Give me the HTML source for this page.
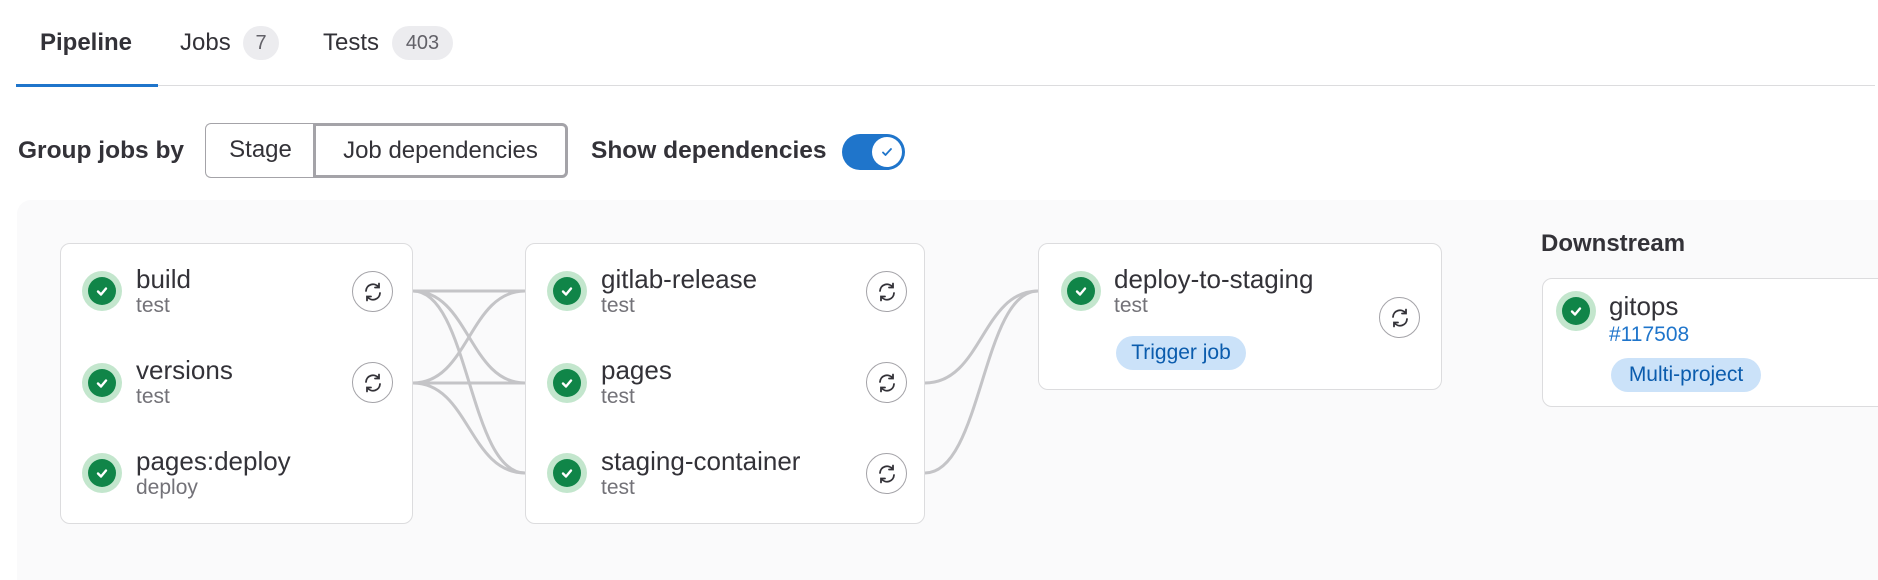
<!DOCTYPE html>
<html><head><meta charset="utf-8"><style>
*{box-sizing:border-box;margin:0;padding:0}
body{width:1878px;height:580px;background:#fff;font-family:"Liberation Sans",sans-serif;color:#333238;position:relative;overflow:hidden}
.a{position:absolute}
.tab{position:absolute;top:28px;font-size:24px;line-height:30px;color:#333238}
.badge{position:absolute;background:#ececef;color:#626168;border-radius:18px;font-size:20px;text-align:center;line-height:34px;height:34px;top:26px}
.card{position:absolute;background:#fff;border:1px solid #dcdcde;border-radius:10px}
.ic{position:absolute;width:40px;height:40px;border-radius:50%;background:#c3e6cd}
.ic::after{content:"";position:absolute;left:6px;top:6px;width:28px;height:28px;border-radius:50%;background:#108548}
.ic svg{position:absolute;left:11px;top:11px;z-index:2}
.nm{position:absolute;font-size:26px;line-height:30px;color:#333238}
.sb{position:absolute;font-size:21px;line-height:24px;color:#737278}
.rt{position:absolute;width:41px;height:41px;border-radius:50%;border:1.5px solid #a4a3a8;background:#fff}
.rt svg{position:absolute;left:9px;top:9px}
.pill{position:absolute;background:#cbe2f9;color:#0b5cad;border-radius:17px;font-size:21px;line-height:34px;height:34px;text-align:center}
</style></head><body>
<div class="tab" style="left:40px;font-weight:bold">Pipeline</div>
<div class="tab" style="left:180px">Jobs</div>
<div class="badge" style="left:243px;width:36px">7</div>
<div class="tab" style="left:323px">Tests</div>
<div class="badge" style="left:392px;width:61px">403</div>
<div class="a" style="left:16px;top:85px;width:1859px;height:1px;background:#dcdcde"></div>
<div class="a" style="left:16px;top:84px;width:142px;height:3px;background:#1f75cb"></div>

<div class="a" style="left:18px;top:136px;font-size:24.5px;font-weight:bold;line-height:30px">Group jobs by</div>
<div class="a" style="left:205px;top:123px;width:110px;height:55px;border:1.5px solid #a4a3a8;border-right:none;border-radius:6px 0 0 6px;font-size:24px;line-height:52px;text-align:center">Stage</div>
<div class="a" style="left:313px;top:123px;width:255px;height:55px;border:3px solid #a4a3a8;border-radius:0 6px 6px 0;font-size:24px;line-height:49px;text-align:center;white-space:nowrap">Job dependencies</div>
<div class="a" style="left:591px;top:136px;font-size:24.5px;font-weight:bold;line-height:30px">Show dependencies</div>
<div class="a" style="left:842px;top:134px;width:63px;height:36px;border-radius:18px;background:#1f75cb">
<div class="a" style="left:30px;top:3px;width:30px;height:30px;border-radius:50%;background:#fff"><svg class="a" style="left:8px;top:8px" width="14" height="14" viewBox="0 0 14 14"><path d="M3 7.5l2.5 2.5L11 4" stroke="#1f75cb" stroke-width="1.8" fill="none" stroke-linecap="round" stroke-linejoin="round"/></svg></div></div>

<div class="a" style="left:17px;top:200px;width:1861px;height:380px;background:#fafafb;border-radius:14px 0 0 0"></div>

<svg class="a" style="left:0;top:0" width="1878" height="580">
<g stroke="#c4c4c7" stroke-width="3" fill="none">
<path d="M413 291H525"/><path d="M413 383H525"/>
<path d="M413 291C469 291 469 383 525 383"/><path d="M413 291C469 291 469 473 525 473"/>
<path d="M413 383C469 383 469 291 525 291"/><path d="M413 383C469 383 469 473 525 473"/>
<path d="M925 383C982 383 982 291 1038 291"/><path d="M925 473C982 473 982 291 1038 291"/>
</g></svg>

<div class="card" style="left:60px;top:243px;width:353px;height:281px"></div>
<div class="card" style="left:525px;top:243px;width:400px;height:281px"></div>
<div class="card" style="left:1038px;top:243px;width:404px;height:147px"></div>
<div class="a" style="left:1541px;top:229px;font-size:24px;font-weight:bold;line-height:30px">Downstream</div>
<div class="card" style="left:1542px;top:278px;width:360px;height:129px"></div>

<div class="ic" style="left:82px;top:271px"><svg width="18" height="18" viewBox="0 0 18 18"><path d="M5 9.5l3 3 5-6" stroke="#fff" stroke-width="2.4" fill="none" stroke-linecap="round" stroke-linejoin="round"/></svg></div>
<div class="ic" style="left:82px;top:363px"><svg width="18" height="18" viewBox="0 0 18 18"><path d="M5 9.5l3 3 5-6" stroke="#fff" stroke-width="2.4" fill="none" stroke-linecap="round" stroke-linejoin="round"/></svg></div>
<div class="ic" style="left:82px;top:453px"><svg width="18" height="18" viewBox="0 0 18 18"><path d="M5 9.5l3 3 5-6" stroke="#fff" stroke-width="2.4" fill="none" stroke-linecap="round" stroke-linejoin="round"/></svg></div>
<div class="ic" style="left:547px;top:271px"><svg width="18" height="18" viewBox="0 0 18 18"><path d="M5 9.5l3 3 5-6" stroke="#fff" stroke-width="2.4" fill="none" stroke-linecap="round" stroke-linejoin="round"/></svg></div>
<div class="ic" style="left:547px;top:363px"><svg width="18" height="18" viewBox="0 0 18 18"><path d="M5 9.5l3 3 5-6" stroke="#fff" stroke-width="2.4" fill="none" stroke-linecap="round" stroke-linejoin="round"/></svg></div>
<div class="ic" style="left:547px;top:453px"><svg width="18" height="18" viewBox="0 0 18 18"><path d="M5 9.5l3 3 5-6" stroke="#fff" stroke-width="2.4" fill="none" stroke-linecap="round" stroke-linejoin="round"/></svg></div>
<div class="ic" style="left:1061px;top:271px"><svg width="18" height="18" viewBox="0 0 18 18"><path d="M5 9.5l3 3 5-6" stroke="#fff" stroke-width="2.4" fill="none" stroke-linecap="round" stroke-linejoin="round"/></svg></div>
<div class="ic" style="left:1556px;top:291px"><svg width="18" height="18" viewBox="0 0 18 18"><path d="M5 9.5l3 3 5-6" stroke="#fff" stroke-width="2.4" fill="none" stroke-linecap="round" stroke-linejoin="round"/></svg></div>

<div class="nm" style="left:136px;top:264px">build</div><div class="sb" style="left:136px;top:294px">test</div>
<div class="nm" style="left:136px;top:355px">versions</div><div class="sb" style="left:136px;top:385px">test</div>
<div class="nm" style="left:136px;top:446px">pages:deploy</div><div class="sb" style="left:136px;top:476px">deploy</div>
<div class="nm" style="left:601px;top:264px">gitlab-release</div><div class="sb" style="left:601px;top:294px">test</div>
<div class="nm" style="left:601px;top:355px">pages</div><div class="sb" style="left:601px;top:385px">test</div>
<div class="nm" style="left:601px;top:446px">staging-container</div><div class="sb" style="left:601px;top:476px">test</div>
<div class="nm" style="left:1114px;top:264px">deploy-to-staging</div><div class="sb" style="left:1114px;top:294px">test</div>
<div class="pill" style="left:1116px;top:336px;width:130px">Trigger job</div>
<div class="nm" style="left:1609px;top:291px">gitops</div>
<div class="sb" style="left:1609px;top:323px;color:#1f75cb">#117508</div>
<div class="pill" style="left:1611px;top:358px;width:150px">Multi-project</div>

<div class="rt" style="left:352px;top:271px"><svg width="22" height="22" viewBox="0 0 22 22"><g stroke="#333238" stroke-width="1.8" fill="none" stroke-linecap="round"><path d="M4 10a7 7 0 0 1 12.5-4"/><path d="M17 2.5v4h-4"/><path d="M18 12a7 7 0 0 1-12.5 4"/><path d="M5 19.5v-4h4"/></g></svg></div>
<div class="rt" style="left:352px;top:362px"><svg width="22" height="22" viewBox="0 0 22 22"><g stroke="#333238" stroke-width="1.8" fill="none" stroke-linecap="round"><path d="M4 10a7 7 0 0 1 12.5-4"/><path d="M17 2.5v4h-4"/><path d="M18 12a7 7 0 0 1-12.5 4"/><path d="M5 19.5v-4h4"/></g></svg></div>
<div class="rt" style="left:866px;top:271px"><svg width="22" height="22" viewBox="0 0 22 22"><g stroke="#333238" stroke-width="1.8" fill="none" stroke-linecap="round"><path d="M4 10a7 7 0 0 1 12.5-4"/><path d="M17 2.5v4h-4"/><path d="M18 12a7 7 0 0 1-12.5 4"/><path d="M5 19.5v-4h4"/></g></svg></div>
<div class="rt" style="left:866px;top:362px"><svg width="22" height="22" viewBox="0 0 22 22"><g stroke="#333238" stroke-width="1.8" fill="none" stroke-linecap="round"><path d="M4 10a7 7 0 0 1 12.5-4"/><path d="M17 2.5v4h-4"/><path d="M18 12a7 7 0 0 1-12.5 4"/><path d="M5 19.5v-4h4"/></g></svg></div>
<div class="rt" style="left:866px;top:453px"><svg width="22" height="22" viewBox="0 0 22 22"><g stroke="#333238" stroke-width="1.8" fill="none" stroke-linecap="round"><path d="M4 10a7 7 0 0 1 12.5-4"/><path d="M17 2.5v4h-4"/><path d="M18 12a7 7 0 0 1-12.5 4"/><path d="M5 19.5v-4h4"/></g></svg></div>
<div class="rt" style="left:1379px;top:297px"><svg width="22" height="22" viewBox="0 0 22 22"><g stroke="#333238" stroke-width="1.8" fill="none" stroke-linecap="round"><path d="M4 10a7 7 0 0 1 12.5-4"/><path d="M17 2.5v4h-4"/><path d="M18 12a7 7 0 0 1-12.5 4"/><path d="M5 19.5v-4h4"/></g></svg></div>
</body></html>
